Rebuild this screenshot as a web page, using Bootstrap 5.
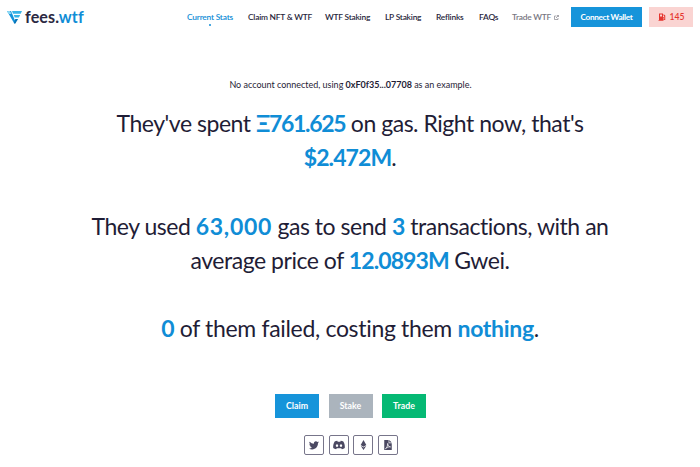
<!DOCTYPE html>
<html lang="en">
<head>
<meta charset="utf-8">
<meta name="viewport" content="width=device-width, initial-scale=1">
<title>fees.wtf</title>
<link href="https://cdn.jsdelivr.net/npm/bootstrap@5.3.0/dist/css/bootstrap.min.css" rel="stylesheet">
<style>
:root{--blue:#108dd6;--ink:#1f1d36}
body{font-family:Lato,"Noto Sans",sans-serif;color:var(--ink);background:#fff;overflow:hidden}
.topbar{height:34px;padding:0 7px 0 6px}
.brand{color:#2b2942;font:700 16.1px/20px Lato,sans-serif;letter-spacing:.1px;width:181px}
.brand b,.stats b{color:var(--blue)}
.brand b{font-weight:700}
.brand svg{margin-right:2px}
.brand span{margin-top:-1px}
.menu{font-size:8.4px;font-weight:600;line-height:12px;letter-spacing:-.22px}
.menu .nav-link{padding:0;color:#28263c;white-space:nowrap;position:relative}
.menu .nav-link.active{color:#108dd6}
.menu .nav-link.active::after{content:"";position:absolute;left:50%;top:13px;width:2.400px;height:2.400px;margin-left:-1px;border-radius:50%;background:var(--blue)}
.m1{width:61px}.m2{width:77px}.m3{width:60px}.m4{width:51px}.m5{width:43px}.m6{width:33px}.m7{width:59px}
.menu .m7{color:#77767f}
.menu .m7 svg{margin-left:1px}
.flat{border:0;border-radius:0;color:#fff;font-weight:700;padding:0;display:flex;align-items:center;justify-content:center}
.flat:hover{color:#fff}
.connect{width:71px;height:20px;background:#1694da;font-size:8.200px;letter-spacing:-.3px}
.gas{width:44px;height:20px;background:#fad4d2;color:#e5352f;font-size:8.600px;font-weight:600}
.note{font-size:9px;line-height:14px;margin-top:44px;padding-left:1px;letter-spacing:-.01px}
.note strong{font-weight:700}
.stats{font-size:23px;line-height:34.200px;margin-top:14px;letter-spacing:-.47px}
.stats p{margin-bottom:34.200px}
.stats b{font-weight:700}
.stats .tight{letter-spacing:-.9px}
.stats .eth{letter-spacing:-1.300px}
.stats .wide{letter-spacing:.7px}
.stats .failed{letter-spacing:-.32px}
.actions{margin-top:48.500px;gap:9.500px;padding-left:1px}
.actions .flat{height:24px;width:44px;font-size:8.800px}
.claim{background:#1694da}.stake{background:#abb4bd}.trade{background:#05b974}
.social{margin-top:17px;gap:4.500px;padding-left:2px}
.social a{width:20px;height:20px;border:1px solid #77758a;border-radius:2px;color:#4b4962}
</style>
</head>
<body>
<header class="topbar d-flex align-items-center">
  <a class="brand d-flex align-items-center text-decoration-none" href="#">
    <svg width="17" height="15" viewBox="0 0 17 15"><path d="M1 1h4l5 12H8z" fill="#1494dc"/><path d="M1 1h3l1.500 3h-3z" fill="#8bd8f4"/><path d="M6 1h10l-1.300 2.700H7zM7.700 5h6.500l-1.300 2.500H8.700z" fill="#39b4e7"/><path d="M9.300 9h2.800L9 14l-1.200-1z" fill="#0875b9"/></svg>
    <span>fees.<b>wtf</b></span>
  </a>
  <nav class="menu nav flex-nowrap">
    <div class="m1"><a class="nav-link active d-inline-block" href="#">Current Stats</a></div>
    <a class="nav-link m2" href="#">Claim NFT &amp; WTF</a>
    <a class="nav-link m3" href="#">WTF Staking</a>
    <a class="nav-link m4" href="#">LP Staking</a>
    <a class="nav-link m5" href="#">Reflinks</a>
    <a class="nav-link m6" href="#">FAQs</a>
    <a class="nav-link m7" href="#">Trade WTF <svg width="5" height="5" viewBox="0 0 10 10" fill="none" stroke="#85848d" stroke-width="1.400"><path d="M5 2H1v7h7V6M6 1h3v3M9 1 4 6"/></svg></a>
  </nav>
  <button class="btn flat connect">Connect Wallet</button>
  <div class="flat gas ms-auto"><svg width="8" height="8" viewBox="0 0 16 16" class="me-1" fill="#e5352f"><path fill-rule="evenodd" d="M2 1h8v7h1.500v4.500h1V7L11 5V2l3.500 3v9H10.500V10H10v4h1v1.500H1V14h1zM4 3v4h4V3z"/></svg>145</div>
</header>
<main class="text-center">
  <div class="note">No account connected, using <strong>0xF0f35...07708</strong> as an example.</div>
  <section class="stats">
    <p>They've spent <b class="eth">Ξ761.625</b> on gas. Right now, that's<br><b class="tight">$2.472M</b>.</p>
    <p>They used <b class="wide">63,000</b> gas to send <b>3</b> transactions, with an<br>average price of <b class="tight">12.0893M</b> Gwei.</p>
    <p class="failed"><b>0</b> of them failed, costing them <b>nothing</b>.</p>
  </section>
  <div class="actions d-flex justify-content-center">
    <button class="btn flat claim">Claim</button><button class="btn flat stake">Stake</button><button class="btn flat trade">Trade</button>
  </div>
  <div class="social d-flex justify-content-center">
    <a href="#" aria-label="Twitter" class="d-flex align-items-center justify-content-center"><svg width="10" height="10" viewBox="0 0 16 16" fill="currentColor"><path d="M5.026 15c6.038 0 9.341-5.003 9.341-9.334q.002-.211-.006-.422A6.700 6.700 0 0 0 16 3.542a6.700 6.700 0 0 1-1.889.518 3.300 3.300 0 0 0 1.447-1.817 6.500 6.500 0 0 1-2.087.793A3.286 3.286 0 0 0 7.875 6.030a9.320 9.320 0 0 1-6.767-3.429 3.290 3.290 0 0 0 1.018 4.382A3.300 3.300 0 0 1 .64 6.575v.045a3.290 3.290 0 0 0 2.632 3.218 3.200 3.200 0 0 1-1.482.056 3.290 3.290 0 0 0 3.067 2.277A6.600 6.600 0 0 1 .78 13.580a6 6 0 0 1-.78-.045A9.340 9.340 0 0 0 5.026 15"/></svg></a>
    <a href="#" aria-label="Discord" class="d-flex align-items-center justify-content-center"><svg width="12" height="10" viewBox="0 0 18 15" fill="currentColor"><path fill-rule="evenodd" d="M7 2.500h4L11.500 1C13 1.200 14.500 1.700 15.500 2.300 17.300 5 18 8 17.700 12c-1.200 1-2.700 1.700-4.400 2l-1-1.700H5.700l-1 1.700C3 13.700 1.500 13 .3 12 0 8 .7 5 2.500 2.300 3.500 1.700 5 1.200 6.500 1zM6 6.500a1.800 2 0 1 0 .01 0zM12 6.500a1.800 2 0 1 0 .01 0z"/></svg></a>
    <a href="#" aria-label="Ethereum" class="d-flex align-items-center justify-content-center"><svg width="7" height="10" viewBox="0 0 10 16" fill="currentColor"><path d="M5 0l4.500 8L5 10.600.5 8zM.5 9.300 5 12l4.500-2.700L5 16z"/></svg></a>
    <a href="#" aria-label="Audit PDF" class="d-flex align-items-center justify-content-center"><svg width="8" height="10" viewBox="0 0 12 16" fill="currentColor"><path d="M0 0h7v5h5v11H0zM8 0l4 4H8z"/><path d="M5.500 5.500c.3 3 1.500 5 4.500 5.500-3-.5-5.500.5-8 3 2.500-2 3.500-5 3.500-8.500z" fill="none" stroke="#fff" stroke-width="1.200"/></svg></a>
  </div>
</main>
<script src="https://cdn.jsdelivr.net/npm/bootstrap@5.3.0/dist/js/bootstrap.bundle.min.js"></script>
</body>
</html>
